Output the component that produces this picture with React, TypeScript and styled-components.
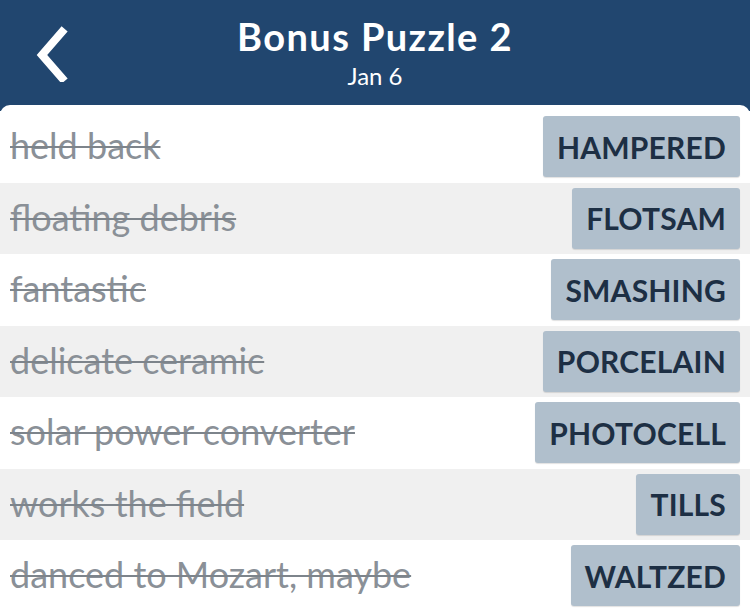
import React from 'react';
import styled, { createGlobalStyle } from 'styled-components';

const GlobalStyle = createGlobalStyle`
  html, body {
    margin: 0;
    padding: 0;
    background: #21466f;
    font-family: 'Lato', 'Noto Sans', sans-serif;
  }
`;

const Page = styled.div`
  width: 750px;
  height: 613px;
  overflow: hidden;
  background: #21466f;
  display: flex;
  flex-direction: column;
`;

const Header = styled.header`
  position: relative;
  height: 105px;
  display: flex;
  flex-direction: column;
  align-items: center;
  justify-content: flex-start;
  padding-top: 13px;
  box-sizing: border-box;
  color: #fff;
`;

const BackButton = styled.button`
  position: absolute;
  left: 30px;
  top: 24px;
  width: 44px;
  height: 60px;
  padding: 0;
  border: none;
  background: transparent;
  display: flex;
  align-items: center;
  justify-content: center;
`;

const Title = styled.h1`
  margin: 0;
  font-size: 38px;
  font-weight: 700;
  line-height: 46px;
  letter-spacing: 1.4px;
`;

const Subtitle = styled.div`
  font-size: 24px;
  line-height: 28px;
  margin-top: 3px;
`;

const Panel = styled.main`
  flex: 1;
  background: #fff;
  border-radius: 10px 10px 0 0;
  padding-top: 6px;
`;

const Row = styled.div<{ $shaded: boolean }>`
  height: 71.5px;
  display: flex;
  align-items: center;
  justify-content: space-between;
  padding: 0 10px;
  background: ${(p) => (p.$shaded ? '#f0f0f0' : '#fff')};
`;

const Clue = styled.span`
  font-size: 36px;
  margin-top: -3px;
  color: #8a9097;
  text-decoration: line-through;
  text-decoration-thickness: 2px;
  text-decoration-color: #7d848b;
`;

const Answer = styled.span`
  height: 61px;
  display: flex;
  align-items: center;
  padding: 0 14px;
  background: #b0bfcc;
  border-radius: 3px;
  box-shadow: 0 1px 1px rgba(0, 0, 0, 0.12);
  color: #1d2f44;
  font-size: 30px;
  font-weight: 700;
  letter-spacing: 0.2px;
`;

const puzzles = [
  ['held back', 'HAMPERED'],
  ['floating debris', 'FLOTSAM'],
  ['fantastic', 'SMASHING'],
  ['delicate ceramic', 'PORCELAIN'],
  ['solar power converter', 'PHOTOCELL'],
  ['works the field', 'TILLS'],
  ['danced to Mozart, maybe', 'WALTZED'],
];

export default function App() {
  return (
    <>
      <GlobalStyle />
      <Page>
        <Header>
          <BackButton aria-label="Back">
            <svg width="36" height="56" viewBox="0 0 36 56">
              <polyline
                points="28,6 8,29 28,52"
                fill="none"
                stroke="#fff"
                strokeWidth="8"
                strokeLinecap="square"
              />
            </svg>
          </BackButton>
          <Title>Bonus Puzzle 2</Title>
          <Subtitle>Jan 6</Subtitle>
        </Header>
        <Panel>
          {puzzles.map(([clue, answer], i) => (
            <Row key={answer} $shaded={i % 2 === 1}>
              <Clue>{clue}</Clue>
              <Answer>{answer}</Answer>
            </Row>
          ))}
        </Panel>
      </Page>
    </>
  );
}
